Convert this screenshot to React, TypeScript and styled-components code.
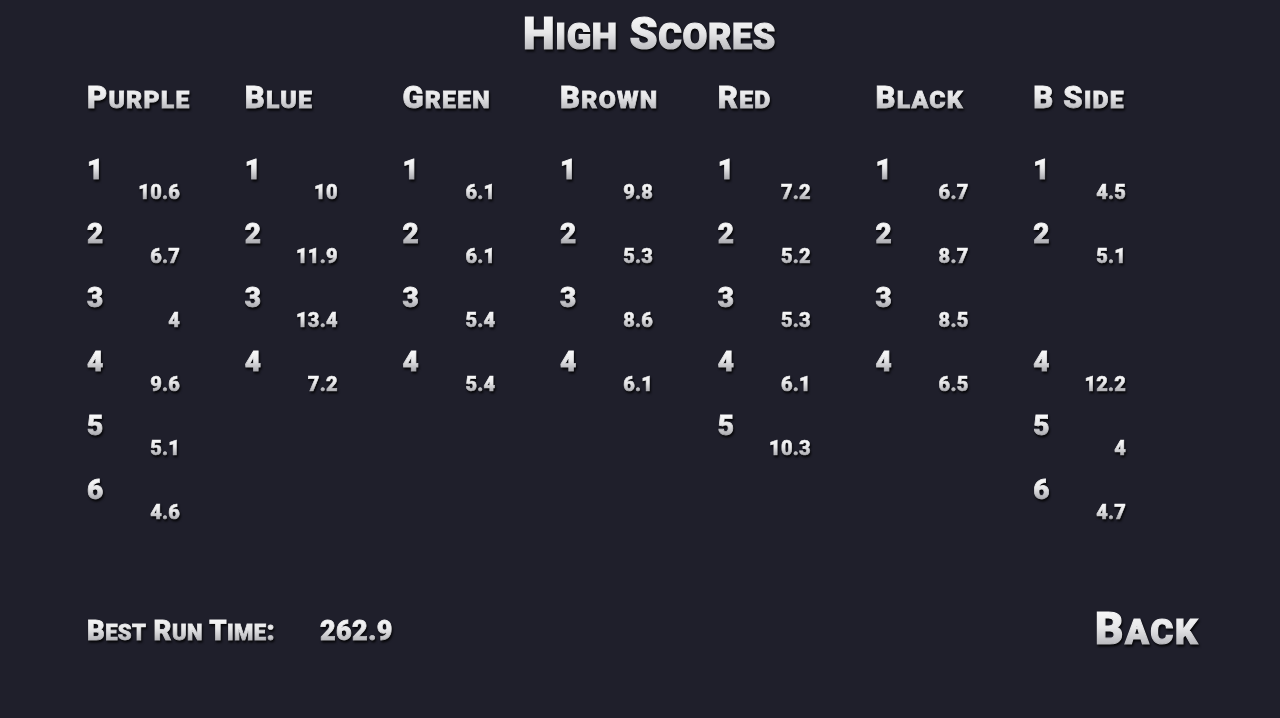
import { createGlobalStyle } from 'styled-components';
import styled from 'styled-components';

const GlobalStyle = createGlobalStyle`
  html, body {
    margin: 0;
    padding: 0;
    background: #1f1f2b;
  }
  body {
    font-family: Roboto, "Liberation Sans", sans-serif;
  }
`;

const Screen = styled.div`
  width: 1280px;
  height: 718px;
  box-sizing: border-box;
  padding: 8px 81px 0 87px;
  display: flex;
  flex-direction: column;
  background: #1f1f2b;
  overflow: hidden;
`;

const Shiny = styled.span<{ $stroke?: number }>`
  display: inline-block;
  background: linear-gradient(180deg, #ffffff 0%, #e6e6e8 45%, #9a9aa0 100%);
  -webkit-background-clip: text;
  background-clip: text;
  color: transparent;
  -webkit-text-stroke: ${({ $stroke = 0.8 }) => $stroke}px transparent;
  filter: drop-shadow(1px 2px 1px rgba(0, 0, 0, 0.85));
`;

const Small = styled.span`
  font-size: 0.8em;
`;

const Title = styled.h1`
  margin: 0;
  text-align: center;
  padding-left: 13px;
  font-family: Roboto, "Liberation Sans", sans-serif;
  font-weight: 900;
  font-size: 45px;
  line-height: 52px;
  letter-spacing: 0.6px;
`;

const Board = styled.div`
  display: grid;
  grid-template-columns: repeat(7, 157.7px);
  margin-top: 18px;
`;

const Column = styled.div`
  display: flex;
  flex-direction: column;
`;

const ColumnHeader = styled.h2`
  margin: 0 0 40px;
  font-family: Roboto, "Liberation Sans", sans-serif;
  font-weight: 900;
  font-size: 31px;
  line-height: 34px;
  letter-spacing: 1.2px;
`;

const Slot = styled.div`
  width: 93px;
  height: 64px;
  display: flex;
  flex-direction: column;
`;

const Rank = styled.div`
  font-family: Roboto, "Liberation Sans", sans-serif;
  font-weight: 900;
  font-size: 28px;
  line-height: 25px;
`;

const Value = styled.div`
  align-self: flex-end;
  font-family: Roboto, "Liberation Sans", sans-serif;
  font-weight: 900;
  font-size: 20px;
  line-height: 20px;
  letter-spacing: 0.2px;
`;

const Footer = styled.div`
  margin-top: auto;
  margin-bottom: 62px;
  display: flex;
  align-items: center;
`;

const RunLabel = styled.div`
  font-family: Roboto, "Liberation Sans", sans-serif;
  font-weight: 900;
  font-size: 27.5px;
  letter-spacing: 0.4px;
  width: 233px;
`;

const RunValue = styled.div`
  font-family: Roboto, "Liberation Sans", sans-serif;
  font-weight: 900;
  font-size: 27px;
  letter-spacing: 0.4px;
`;

const BackButton = styled.button`
  margin-left: auto;
  padding: 0;
  border: none;
  background: none;
  cursor: pointer;
  font-family: Roboto, "Liberation Sans", sans-serif;
  font-weight: 900;
  font-size: 44px;
  line-height: 48px;
  letter-spacing: 1.6px;
`;

function Caps({ text, stroke }: { text: string; stroke?: number }) {
  const parts: { big: boolean; s: string }[] = [];
  for (const ch of text) {
    const big = ch === ch.toUpperCase();
    const last = parts[parts.length - 1];
    if (last && last.big === big) last.s += ch;
    else parts.push({ big, s: ch });
  }
  return (
    <Shiny $stroke={stroke}>
      {parts.map((p, i) =>
        p.big ? <span key={i}>{p.s}</span> : <Small key={i}>{p.s.toUpperCase()}</Small>
      )}
    </Shiny>
  );
}

type Score = number | null;

const columns: { name: string; scores: Score[] }[] = [
  { name: 'Purple', scores: [10.6, 6.7, 4, 9.6, 5.1, 4.6] },
  { name: 'Blue', scores: [10, 11.9, 13.4, 7.2] },
  { name: 'Green', scores: [6.1, 6.1, 5.4, 5.4] },
  { name: 'Brown', scores: [9.8, 5.3, 8.6, 6.1] },
  { name: 'Red', scores: [7.2, 5.2, 5.3, 6.1, 10.3] },
  { name: 'Black', scores: [6.7, 8.7, 8.5, 6.5] },
  { name: 'B Side', scores: [4.5, 5.1, null, 12.2, 4, 4.7] },
];

export default function App() {
  return (
    <>
      <GlobalStyle />
      <Screen>
        <Title>
          <Caps text="High Scores" stroke={1.2} />
        </Title>
        <Board>
          {columns.map((col) => (
            <Column key={col.name}>
              <ColumnHeader>
                <Caps text={col.name} />
              </ColumnHeader>
              {col.scores.map((s, i) => (
                <Slot key={i}>
                  {s !== null && (
                    <>
                      <Rank>
                        <Shiny>{i + 1}</Shiny>
                      </Rank>
                      <Value>
                        <Shiny $stroke={0.6}>{s}</Shiny>
                      </Value>
                    </>
                  )}
                </Slot>
              ))}
            </Column>
          ))}
        </Board>
        <Footer>
          <RunLabel>
            <Caps text="Best Run Time:" />
          </RunLabel>
          <RunValue>
            <Shiny>262.9</Shiny>
          </RunValue>
          <BackButton type="button">
            <Caps text="Back" stroke={1.2} />
          </BackButton>
        </Footer>
      </Screen>
    </>
  );
}
